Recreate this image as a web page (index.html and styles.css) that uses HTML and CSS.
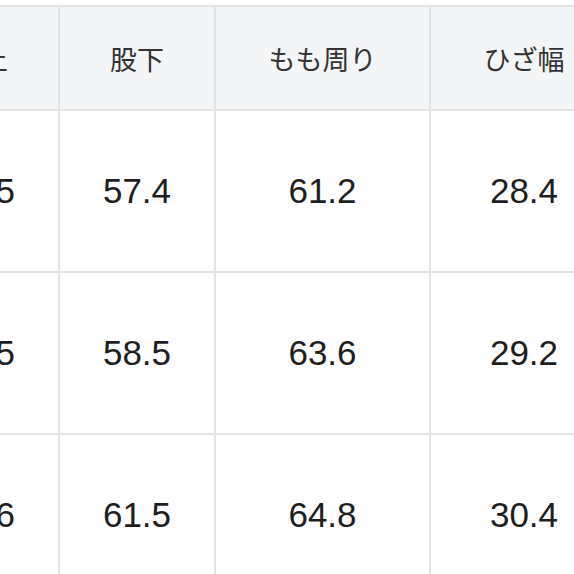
FILE: index.html
```html
<!DOCTYPE html>
<html lang="ja">
<head>
<meta charset="utf-8">
<link rel="stylesheet" href="styles.css">
</head>
<body>
<div class="viewport">
  <div class="size-table">
    <div class="cell head">股上</div>
    <div class="cell head">股下</div>
    <div class="cell head">もも周り</div>
    <div class="cell head">ひざ幅</div>
    <div class="cell">26.5</div>
    <div class="cell">57.4</div>
    <div class="cell">61.2</div>
    <div class="cell">28.4</div>
    <div class="cell">27.5</div>
    <div class="cell">58.5</div>
    <div class="cell">63.6</div>
    <div class="cell">29.2</div>
    <div class="cell">28.6</div>
    <div class="cell">61.5</div>
    <div class="cell">64.8</div>
    <div class="cell">30.4</div>
  </div>
</div>
</body>
</html>
```
FILE: styles.css
```css
html, body {
  margin: 0;
  padding: 0;
  background: #ffffff;
}
.viewport {
  width: 574px;
  height: 574px;
  overflow: hidden;
}
.size-table {
  display: grid;
  grid-template-columns: 154px 154px 213px 186px;
  grid-template-rows: 102px 160px 160px 160px;
  gap: 2px;
  padding: 2px;
  background: #e1e3e5;
  width: max-content;
  margin-top: 5px;
  margin-left: -98px;
}
.cell {
  background: #ffffff;
  display: flex;
  align-items: center;
  justify-content: center;
  font-family: "Liberation Sans", Arial, sans-serif;
  font-size: 35px;
  color: #1e1e1e;
}
.cell.head {
  background: #f4f5f6;
  font-family: "Noto Sans CJK JP", "Noto Sans", sans-serif;
  font-size: 27px;
  color: #333333;
}
```
